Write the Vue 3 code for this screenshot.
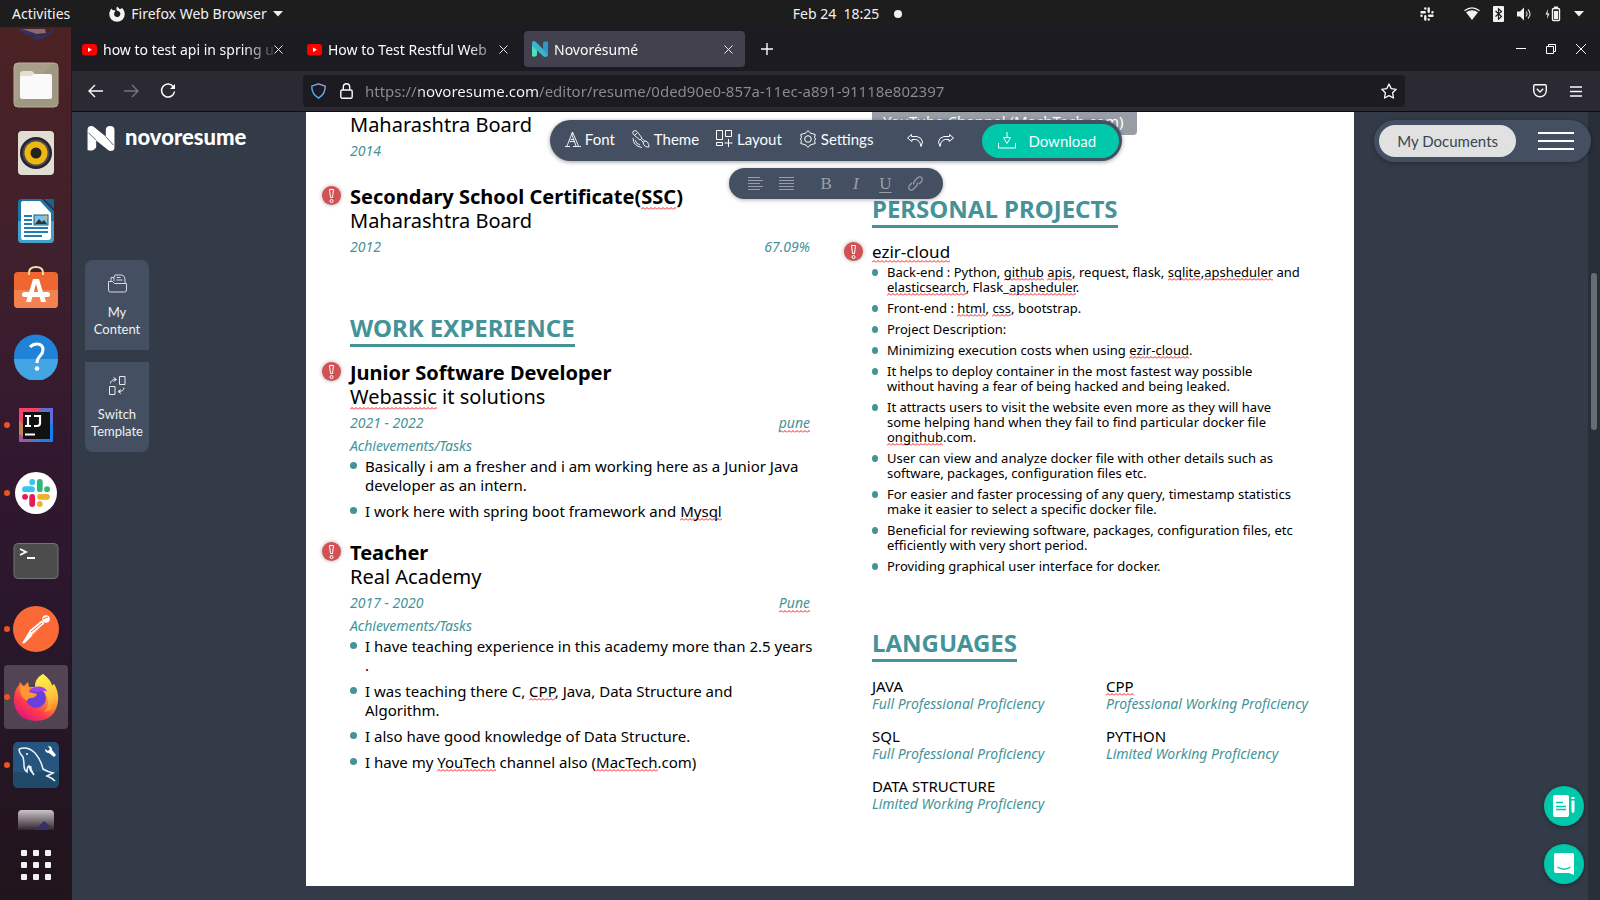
<script setup>
const tabs = [
  { title: 'how to test api in spring u', kind: 'video', active: false },
  { title: 'How to Test Restful Web', kind: 'video', active: false },
  { title: 'Novorésumé', kind: 'novo', active: true },
]

const url = 'https://novoresume.com/editor/resume/0ded90e0-857a-11ec-a891-91118e802397'

// Words in square brackets are flagged by the spell checker.
const parse = (line) =>
  line.split(/(\[[^\]]*\])/).filter(Boolean).map((part) =>
    part[0] === '[' ? { text: part.slice(1, -1), flagged: true } : { text: part, flagged: false })

const education = [
  { org: 'Maharashtra Board', date: '2014', side: '' },
  { title: 'Secondary School Certificate([SSC])', org: 'Maharashtra Board', date: '2012', side: '67.09%' },
]

const jobs = [
  {
    title: 'Junior Software Developer',
    org: '[Webassic] it solutions',
    date: '2021 - 2022',
    side: '[pune]',
    tasks: [
      ['Basically i am a fresher and i am working here as a Junior Java', 'developer as an intern.'],
      ['I work here with spring boot framework and [Mysql]'],
    ],
  },
  {
    title: 'Teacher',
    org: 'Real Academy',
    date: '2017 - 2020',
    side: '[Pune]',
    tasks: [
      ['I have teaching experience in this academy more than 2.5 years', '.'],
      ['I was teaching there C, [CPP], Java, Data Structure and', 'Algorithm.'],
      ['I also have good knowledge of Data Structure.'],
      ['I have my [YouTech] channel also ([MacTech].com)'],
    ],
  },
]

const projectPoints = [
  ['Back-end : Python, [github] [apis], request, flask, [sqlite],[apsheduler] and', '[elasticsearch], Flask_[apsheduler].'],
  ['Front-end : [html], [css], bootstrap.'],
  ['Project Description:'],
  ['Minimizing execution costs when using [ezir-cloud].'],
  ['It helps to deploy container in the most fastest way possible', 'without having a fear of being hacked and being leaked.'],
  ['It attracts users to visit the website even more as they will have', 'some helping hand when they fail to find particular docker file', '[ongithub].com.'],
  ['User can view and analyze docker file with other details such as', 'software, packages, configuration files etc.'],
  ['For easier and faster processing of any query, timestamp statistics', 'make it easier to select a specific docker file.'],
  ['Beneficial for reviewing software, packages, configuration files, etc', 'efficiently with very short period.'],
  ['Providing graphical user interface for docker.'],
]

const languages = [
  { name: 'JAVA', level: 'Full Professional Proficiency' },
  { name: '[CPP]', level: 'Professional Working Proficiency' },
  { name: 'SQL', level: 'Full Professional Proficiency' },
  { name: 'PYTHON', level: 'Limited Working Proficiency' },
  { name: 'DATA STRUCTURE', level: 'Limited Working Proficiency' },
]
</script>

<template>
  <div class="desktop">
    <header class="topbar">
      <div class="top-left">
        <button class="plain">Activities</button>
        <button class="plain app-menu">
          <svg width="16" height="16" viewBox="0 0 16 16"><path d="M8 0.5C9 1.500 10 2 10.500 3 11.500 3 12.500 2.500 13 2c1.500 1.500 3 3.700 2.700 6.500A7.700 7.300 0 0 1 .3 8.500C.2 6 1.200 4 2.500 2.500L3.500 4 6.500 4.500 5.500 6.500C4.500 8.500 5.500 10.800 8 10.900c2.500 0 3.800-2.200 3.200-4C10.700 5.500 9.500 5 8.500 5 7.200 4 7.200 2 8 .5z" fill="#f2f2f2" /></svg>
          <span>Firefox Web Browser</span>
          <svg width="10" height="6" viewBox="0 0 10 6"><path d="M0 0h10L5 5.500z" fill="#f2f2f2" /></svg>
        </button>
      </div>
      <button class="plain clock">Feb 24&nbsp; 18:25 <i></i></button>
      <div class="top-right">
        <svg class="tray-slack" width="14" height="14" viewBox="0 0 14 14" stroke="#f2f2f2" stroke-width="2.400" stroke-linecap="round"><path d="M1.500 5.300h3.300M5.300 1.500v.1M8.700 1.500v3.300M12.400 5.300h.1M9.200 8.700h3.300M8.700 12.400v.1M5.300 9.200v3.300M1.500 8.700h.1" /></svg>
        <svg width="16" height="14" viewBox="0 0 16 14"><path d="M.5 3.800Q8-2 15.500 3.800" fill="none" stroke="#f2f2f2" stroke-width="1.300" /><path d="M2 5.200Q8 1.500 14 5.200L8 13z" fill="#f2f2f2" /></svg>
        <svg width="11" height="16" viewBox="0 0 11 16"><rect width="11" height="16" rx="1" fill="#f2f2f2" /><path d="M2.500 5l6 5.500-3 2.700V2.800l3 2.700-6 5" fill="none" stroke="#1d1d1d" stroke-width="1.200" /></svg>
        <svg width="15" height="14" viewBox="0 0 15 14"><path d="M0 4.500h3L7 .5v13L3 9.500H0z" fill="#f2f2f2" /><path d="M9 4.500q2 2.500 0 5M11 2.500q4 4.500 0 9" fill="none" stroke="#d0d0d0" stroke-width="1.200" /></svg>
        <svg width="16" height="16" viewBox="0 0 16 16"><path d="M3 3L.5 8.500h2L2 13l2.500-5.500h-2z" fill="#f2f2f2" /><rect x="7.500" y="2.500" width="7" height="12" rx="1" fill="none" stroke="#f2f2f2" stroke-width="1.400" /><path d="M9 .5h4v2H9zM9 5h4v8H9z" fill="#f2f2f2" /></svg>
        <svg width="10" height="6" viewBox="0 0 10 6"><path d="M0 0h10L5 5.500z" fill="#f2f2f2" /></svg>
      </div>
    </header>

    <div class="below">
      <nav class="dock" aria-label="Dock">
        <button class="slot slot-top" aria-label="Thunderbird">
          <svg width="44" height="14" viewBox="0 0 44 14"><path d="M3 2q8 7 18 7-4 2-6 1 4 3 9 3 12-3 17-11l-6 3-9 4L16 2z" fill="#323063" /><path d="M8 2h23l1 4-9 1z" fill="#8a6870" /></svg>
        </button>
        <button class="slot" aria-label="Files">
          <svg width="46" height="46" viewBox="0 0 46 46"><rect x="1" y="1" width="44" height="44" rx="4" fill="#a79f8a" stroke="#b9b29d" /><path d="M1.500 40L40 1.500h2q3 0 3 3v37q0 3-3 3H5q-3 0-3.500-3z" fill="#979077" opacity=".5" /><path d="M7 12q0-3 3-3h9l4 4v6H7z" fill="#e4dfd3" /><path d="M7 16q0-2 2-2h9l3-2h16q2 0 2 2v21q0 2-2 2H9q-2 0-2-2z" fill="#fafafa" /></svg>
        </button>
        <button class="slot" aria-label="Rhythmbox">
          <svg width="46" height="46" viewBox="0 0 46 46"><rect x="5" y="1" width="36" height="44" rx="4" fill="#e2ddd2" /><circle cx="23" cy="23" r="16" fill="#25232f" /><circle cx="23" cy="23" r="13.500" fill="#4a4956" /><circle cx="23" cy="23" r="11.500" fill="#eeb711" /><circle cx="23" cy="23" r="5.500" fill="#222" /></svg>
        </button>
        <button class="slot" aria-label="LibreOffice Writer">
          <svg width="46" height="46" viewBox="0 0 46 46"><path d="M9 1h20l12 12v28q0 4-4 4H9q-4 0-4-4V5q0-4 4-4z" fill="#1b75a6" /><path d="M5 23h36v18q0 4-4 4H9q-4 0-4-4z" fill="#459fcb" /><path d="M31 1h10v10z" fill="#1a628c" /><path d="M10 3h17l11 12v24q0 3-3 3H10q-2 0-2-3V5q0-2 2-2z" fill="#fff" /><path d="M11 18h8M11 22h8M11 26h8M11 30h24M11 34h24M11 38h18" stroke="#227eb0" stroke-width="2" /><rect x="21" y="17" width="14" height="10" fill="#7cc4e8" stroke="#175b84" /><path d="M22 26l4-5 3 3 2-2 3 4z" fill="#333" /><circle cx="33" cy="19" r="1.500" fill="#efbd22" /></svg>
        </button>
        <button class="slot" aria-label="Ubuntu Software">
          <svg width="46" height="46" viewBox="0 3 46 46"><rect x="1" y="9" width="44" height="36" rx="4" fill="#ef6630" /><path d="M1 27h44v14q0 4-4 4H5q-4 0-4-4z" fill="#f3824e" /><path d="M16 12v-2q0-6 7-6t7 6v2" fill="none" stroke="#f7d9a5" stroke-width="2" /><path d="M13 39l7-23h6l7 23h-5l-5-18-5 18z" fill="#fff" /><rect x="9" y="29" width="28" height="5" rx="2.500" fill="#fff" /></svg>
        </button>
        <button class="slot" aria-label="Help">
          <svg width="46" height="46" viewBox="0 0 46 46"><circle cx="23" cy="22.500" r="22" fill="#2083d8" /><path d="M1 25a22 22 0 0 0 44 0z" fill="#44a5e5" /><path d="M17 13q3-3 7-3 6 0 6 6 0 3-3 6-3 3-3 7" fill="none" stroke="#fff" stroke-width="3" /><circle cx="24" cy="34.500" r="2.300" fill="#fff" /></svg>
        </button>
        <button class="slot running" aria-label="IntelliJ IDEA">
          <svg width="46" height="46" viewBox="0 0 46 46"><path d="M6 6h34v34H6z" fill="#5d6fd6" /><path d="M6 6h22L6 30z" fill="#f7406a" /><path d="M6 18l8 8-4 14H6z" fill="#c18555" /><path d="M6 32l14 8H6z" fill="#a355a0" /><path d="M40 20L26 40h14z" fill="#157ef2" /><rect x="10" y="10" width="27" height="27" fill="#111" /><path d="M12 14h6M15 14v10M12 24h6M21 14h6v7q0 3-3 3h-3" fill="none" stroke="#fff" stroke-width="2.200" /><path d="M12 32.500h10" stroke="#fff" stroke-width="2" /></svg>
        </button>
        <button class="slot running" aria-label="Slack">
          <svg width="46" height="46" viewBox="0 0 46 46" stroke-width="5.800" stroke-linecap="round"><circle cx="23" cy="23" r="21" fill="#fff" /><path d="M12 19.200h7M19.200 12v.2h0" stroke="#36c5f0" /><path d="M26.800 12v7.200M34 19.200h.1" stroke="#2eb67d" /><path d="M19.200 27v7M12 26.800h.1" stroke="#e01e5a" /><path d="M27 26.800h7M26.800 34v.1" stroke="#ecb22e" /></svg>
        </button>
        <button class="slot" aria-label="Terminal">
          <svg width="46" height="46" viewBox="0 0 46 46"><rect x="1" y="5.500" width="44" height="35" rx="4" fill="#4c4c4c" stroke="#747474" /><path d="M7 11l6 3-6 3M14 20h8" fill="none" stroke="#fff" stroke-width="1.800" /></svg>
        </button>
        <button class="slot running" aria-label="Postman">
          <svg width="46" height="46" viewBox="0 0 46 46"><circle cx="23" cy="23" r="23" fill="#fb6a36" /><circle cx="33" cy="13" r="3.800" fill="#fff" /><path d="M17 24l11-9q3 0 3 3L20 29l-8 8-3 .5 1-2z" fill="#fff" /><path d="M18 26l11-9M19 29l11-10M30 13l5-2" stroke="#fb6a36" /></svg>
        </button>
        <button class="slot running current" aria-label="Firefox">
          <svg width="46" height="48" viewBox="0 0 46 48">
            <defs>
              <linearGradient id="fox" x1=".9" y1="0" x2=".2" y2="1"><stop offset="0" stop-color="#fff14e" /><stop offset=".4" stop-color="#ff9a2d" /><stop offset=".7" stop-color="#ff3c4c" /><stop offset="1" stop-color="#dd0f82" /></linearGradient>
              <linearGradient id="flame" x1=".4" y1="0" x2=".6" y2="1"><stop offset="0" stop-color="#fff34f" /><stop offset=".6" stop-color="#ffc53a" /><stop offset="1" stop-color="#ff8a35" /></linearGradient>
            </defs>
            <path d="M30 1q8 6 9 12l2-2q5 8 4 17-2 19-22 20Q3 47 1 29 0 18 6 12l1-3q2 3 4 4l4-4 1 5 6 0Q21 6 30 1z" fill="url(#fox)" />
            <path d="M30 1q8 6 9 12l2-2q5 9 3 18-3 9-13 10 6-6 3-15-3-9-12-10Q22 6 30 1z" fill="url(#flame)" />
            <circle cx="23" cy="25" r="10" fill="#6a40dc" />
            <path d="M15 18q7-6 14-4 5 2 5 5-3-2-6-1l-3 1z" fill="#9a45eb" />
            <path d="M7 11q2 3 9 2 1 4 0 6l8 2q-1 4-7 4-3 1-3 3-8-4-7-17z" fill="#ff9630" />
          </svg>
        </button>
        <button class="slot running" aria-label="MySQL Workbench">
          <svg width="46" height="46" viewBox="0 0 46 46"><rect width="46" height="46" rx="5" fill="#25557e" /><path d="M0 30h46v11q0 5-5 5H5q-5 0-5-5z" fill="#1e425e" opacity=".6" /><path d="M6 7q9-3 16 4 6 7 8 16 5 3 10 4l-6 3q5 2 8 5M6 7q0 4 4 8 1 4 1 8 0 5 3 7 0-5 2-6 1 5 5 9-4-6-3-9" fill="none" stroke="#edf5fb" stroke-width="1.500" /><circle cx="14" cy="12" r="1" fill="#fff" /><path d="M35 4l2 3-2 2-3-2q0 4 4 4l5 4 2-2-4-5q0-4-4-4z" fill="#fff" /></svg>
        </button>
        <button class="slot slot-end" aria-label="Drawing app">
          <svg width="36" height="20" viewBox="0 0 36 20"><defs><linearGradient id="fade" x1="0" y1="0" x2="0" y2="1"><stop offset="0" stop-color="#cbc4ca" /><stop offset="1" stop-color="#33242f" /></linearGradient></defs><path d="M0 20V4q0-4 4-4h28q4 0 4 4v16z" fill="url(#fade)" /><path d="M17 20l9-9 6 5-3 4z" fill="#333168" /></svg>
        </button>
        <button class="apps" aria-label="Show Applications"><i v-for="n in 9" :key="n"></i></button>
      </nav>

      <section class="window">
        <div class="tabbar">
          <div v-for="tab in tabs" :key="tab.title" class="tab" :class="{ active: tab.active }">
            <svg v-if="tab.kind === 'video'" width="15" height="15" viewBox="0 0 15 15"><rect y="2" width="15" height="11.500" rx="3" fill="#f00" /><path d="M6 5.500v4.500L10 7.700z" fill="#fff" /></svg>
            <svg v-else width="16" height="16" viewBox="0 0 16 16"><path d="M0 2q0-2 2-2 1 0 2 1l12 12q0 3-2.500 3Q12 16 11 15L5 9.500V14q-2 2.500-5 1z" fill="#38b6cf" /><path d="M0 5l5 4.500V14q-2 2.500-5 1z" fill="#4fe0bb" /><path d="M11 2q2-3 5-1v13l-5-5z" fill="#2d97c6" /></svg>
            <button class="tab-title">{{ tab.title }}</button>
            <button class="tab-close" aria-label="Close tab"><svg width="9" height="9" viewBox="0 0 9 9"><path d="M.5.5l8 8M8.500.5l-8 8" stroke="#e8e8ec" stroke-width="1" /></svg></button>
          </div>
          <button class="new-tab" aria-label="New tab"><svg width="12" height="12" viewBox="0 0 12 12"><path d="M6 0v12M0 6h12" stroke="#fbfbfe" stroke-width="1.400" /></svg></button>
          <div class="win-controls">
            <button aria-label="Minimize"><svg width="10" height="10" viewBox="0 0 10 10"><path d="M0 4.500h10" stroke="#fff" /></svg></button>
            <button aria-label="Restore"><svg width="10" height="10" viewBox="0 0 10 10"><path d="M.5 2.500h7v7h-7zM2.500 2.500v-2h7v7h-2" fill="none" stroke="#fff" /></svg></button>
            <button aria-label="Close"><svg width="10" height="10" viewBox="0 0 10 10"><path d="M0 0l10 10M10 0L0 10" stroke="#fff" /></svg></button>
          </div>
        </div>

        <div class="navbar">
          <div class="nav-buttons">
            <button aria-label="Back"><svg width="15" height="14" viewBox="0 0 15 14"><path d="M15 7H1M7 1L1 7l6 6" fill="none" stroke="#fbfbfe" stroke-width="1.400" /></svg></button>
            <button aria-label="Forward"><svg width="15" height="14" viewBox="0 0 15 14"><path d="M0 7h14M8 1l6 6-6 6" fill="none" stroke="#77767e" stroke-width="1.400" /></svg></button>
            <button aria-label="Reload"><svg width="16" height="16" viewBox="0 0 16 16"><path d="M13.500 4A6.500 6.500 0 1 0 14.500 8.500" fill="none" stroke="#fbfbfe" stroke-width="1.500" /><path d="M15 1v5h-5z" fill="#fbfbfe" /></svg></button>
          </div>
          <div class="urlbar">
            <svg width="15" height="16" viewBox="0 0 15 16"><defs><linearGradient id="shield" x1="0" y1="1" x2="1" y2="0"><stop offset="0" stop-color="#25b8f5" /><stop offset="1" stop-color="#b39af0" /></linearGradient></defs><path d="M7.500.8l6.700 2.400Q14.500 11 7.500 15.200.5 11 .8 3.200z" fill="none" stroke="url(#shield)" stroke-width="1.400" stroke-linejoin="round" /></svg>
            <svg width="13" height="16" viewBox="0 0 13 16"><rect x=".8" y="7" width="11.400" height="8.200" rx="1.500" fill="none" stroke="#fbfbfe" stroke-width="1.400" /><path d="M3.300 7V4q0-3.200 3.200-3.200T9.700 4v3" fill="none" stroke="#fbfbfe" stroke-width="1.400" /></svg>
            <input class="url" type="text" aria-label="Address" :value="url" />
            <button aria-label="Bookmark"><svg width="16" height="16" viewBox="0 0 16 16"><path d="M8 1l2.200 4.600 5 .7-3.600 3.500.9 5.200L8 12.600 3.500 15l.9-5.200L.8 6.300l5-.7z" fill="none" stroke="#fbfbfe" stroke-width="1.300" stroke-linejoin="round" /></svg></button>
          </div>
          <div class="nav-end">
            <button aria-label="Pocket"><svg width="14" height="14" viewBox="0 0 14 14"><path d="M2 .7h10q1.300 0 1.300 1.300v4.500A6.300 6.300 0 0 1 .7 6.500V2Q.7.700 2 .7z" fill="none" stroke="#fbfbfe" stroke-width="1.400" /><path d="M3.800 4.800L7 8l3.200-3.200" fill="none" stroke="#fbfbfe" stroke-width="1.400" /></svg></button>
            <button aria-label="Menu"><svg width="12" height="11" viewBox="0 0 12 11"><path d="M0 1h12M0 5.500h12M0 10h12" stroke="#fbfbfe" stroke-width="1.300" /></svg></button>
          </div>
        </div>

        <main class="editor">
          <div class="overlay">
            <a class="brand" href="#">
              <svg width="28" height="25" viewBox="0 0 28 26"><path d="M0 4q0-4 4-4 2 0 4 2l11 9V4q0-4 4.500-4T28 4v18q0 4-4 4-2 0-4-2L9 15v7q-3 5-9 3z" fill="#fff" /><path d="M1 7l8 8M19 11l8 9" stroke="#323b47" stroke-width=".8" /></svg>
              <span>novoresume</span>
            </a>
            <div class="toolbars">
              <div class="toolbar">
                <button class="tool"><svg width="16" height="16" viewBox="0 0 16 16" fill="none" stroke="#fff" stroke-width=".9"><path d="M0 15.500h5M8 15.500h8M2 15L7.500 1 13.500 15M7.500 1l-.5 3 4 11M4.500 10.500H10M5.500 8.500h3.700" /></svg>Font</button>
                <button class="tool"><svg width="18" height="18" viewBox="0 0 18 18" fill="none" stroke="#fff" stroke-width=".9"><path d="M1 1.500q2-2 4 0l5 6.500-2 2-6-5q-2-2-1-3.500zM3 5l2-2M8.500 9.500l3 3M10 8.500l3 3M11 12.500q2-3 4.500-.5 1.500 2.500 1.500 5-5 .5-6-4.500zM1 8q0 8 9 9.500M3 10q1 4 5 5" /></svg>Theme</button>
                <button class="tool"><svg width="17" height="17" viewBox="0 0 17 17" fill="none" stroke="#fff" stroke-width="1"><path d="M.5.5h6v9h-6zM9.500.5h6v6h-6zM.5 12.500h6v3h-6zM12.500 9v8M8.500 13h8" /></svg>Layout</button>
                <button class="tool"><svg width="18" height="18" viewBox="0 0 18 18" fill="none" stroke="#fff" stroke-width="1"><path d="M9 .6l2 2.200 2.200.9 3 .7-.6 3 1 1.600-1 1.600.6 3-3 .7-2.200.9-2 2.200-2-2.200-2.200-.9-3-.7.6-3-1-1.600 1-1.600-.6-3 3-.7L7 2.800z" /><circle cx="9" cy="9" r="3.300" /></svg>Settings</button>
                <div class="history">
                  <button aria-label="Undo"><svg width="17" height="13" viewBox="0 0 17 13" fill="none" stroke="#fff"><path d="M4.500.5L.5 4 5 7.500V5.500q8-1.500 9 7 3-5 0-8-3-3-9.500-2z" /></svg></button>
                  <button aria-label="Redo"><svg width="17" height="13" viewBox="0 0 17 13" fill="none" stroke="#fff"><path d="M12.500.5l4 3.500-4.500 3.500V5.500Q4 4 3 12.500 0 7.500 3 4.500q3-3 9.500-2z" /></svg></button>
                </div>
                <button class="download"><svg width="18" height="17" viewBox="0 0 18 17" fill="none" stroke="#fff" stroke-width="1"><path d="M.5 11v5h17v-5M9 0v5M5.500 5.500h7L9 11.500z" /></svg>Download</button>
              </div>
              <div class="formatbar">
                <button aria-label="Align left"><svg width="15" height="13" viewBox="0 0 15 13" stroke="#9aa0a9"><path d="M0 .5h12M0 3.500h15M0 6.500h12M0 9.500h15M0 12.500h12" /></svg></button>
                <button class="justify" aria-label="Justify"><svg width="15" height="13" viewBox="0 0 15 13" stroke="#9aa0a9"><path d="M0 .5h15M0 3.500h15M0 6.500h15M0 9.500h15M0 12.500h15" /></svg></button>
                <button class="letter">B</button>
                <button class="letter slanted">I</button>
                <button class="letter lined">U</button>
                <button aria-label="Link"><svg width="15" height="15" viewBox="0 0 15 15" fill="none" stroke="#9aa0a9" stroke-width="1.200"><path d="M6 8.500q-1-2 .5-3.500l3-3q2-2 4-.5 1.500 2 0 4L11 8M9 6.500q1 2-.5 3.500l-3 3q-2 2-4 .5-1.500-2 0-4L4 7" /></svg></button>
              </div>
            </div>
            <div class="account">
              <button class="docs">My Documents</button>
              <button class="burger" aria-label="Open menu"><i></i><i></i><i></i></button>
            </div>
          </div>

          <aside class="side">
            <button class="side-btn">
              <svg width="19" height="19" viewBox="0 0 19 19" fill="none" stroke="#e8ebee" stroke-width=".9"><path d="M.5 16V7.500h4l2 2h12V16q0 2-2 2h-14q-2 0-2-2zM3 7V3.500h3l1-2.500h7q3 1 3 4v4M6 4v3M8.500 3.500h4M8.500 6h6" /></svg>
              <span>My<br />Content</span>
            </button>
            <button class="side-btn">
              <svg width="17" height="19" viewBox="0 0 17 19" fill="none" stroke="#e8ebee" stroke-width="1"><path d="M10.500.5h5.500v8h-5.500zM.5 10.500H6v8H.5zM1.500 7.500q0-4 5.500-4M4.500 1.500l3 2-3 2M15 11.500q0 4-5.500 4M12 13.500l-3 2 3 2" /></svg>
              <span>Switch<br />Template</span>
            </button>
          </aside>

          <article class="sheet">
            <div class="tooltip">YouTube Channel (MachTech.com)</div>
            <div class="col left">
              <section class="entries">
                <div v-for="(e, i) in education" :key="i" class="entry">
                  <span v-if="e.title" class="alert"><svg width="7" height="14" viewBox="0 0 7 14" fill="none" stroke="#fff"><path d="M1.500.5h4l-1 8h-2z" /><circle cx="3.500" cy="12" r="1.500" /></svg></span>
                  <h3 v-if="e.title"><span v-for="(p, k) in parse(e.title)" :key="k" :class="{ typo: p.flagged }">{{ p.text }}</span></h3>
                  <p class="org">{{ e.org }}</p>
                  <p class="meta"><span>{{ e.date }}</span><span>{{ e.side }}</span></p>
                </div>
              </section>
              <section class="block">
                <h2>WORK EXPERIENCE</h2>
                <div class="entries">
                  <div v-for="job in jobs" :key="job.title" class="entry">
                    <span class="alert"><svg width="7" height="14" viewBox="0 0 7 14" fill="none" stroke="#fff"><path d="M1.500.5h4l-1 8h-2z" /><circle cx="3.500" cy="12" r="1.500" /></svg></span>
                    <h3>{{ job.title }}</h3>
                    <p class="org"><span v-for="(p, k) in parse(job.org)" :key="k" :class="{ typo: p.flagged }">{{ p.text }}</span></p>
                    <p class="meta"><span>{{ job.date }}</span><span v-for="(p, k) in parse(job.side)" :key="k" :class="{ typo: p.flagged }">{{ p.text }}</span></p>
                    <p class="label">Achievements/Tasks</p>
                    <ul class="tasks">
                      <li v-for="(lines, j) in job.tasks" :key="j"><div v-for="(line, m) in lines" :key="m"><span v-for="(p, k) in parse(line)" :key="k" :class="{ typo: p.flagged }">{{ p.text }}</span></div></li>
                    </ul>
                  </div>
                </div>
              </section>
            </div>

            <div class="col right">
              <section>
                <h2>PERSONAL PROJECTS</h2>
                <div class="entry">
                  <span class="alert"><svg width="7" height="14" viewBox="0 0 7 14" fill="none" stroke="#fff"><path d="M1.500.5h4l-1 8h-2z" /><circle cx="3.500" cy="12" r="1.500" /></svg></span>
                  <p class="project"><span class="typo">ezir-cloud</span></p>
                  <ul class="points">
                    <li v-for="(lines, j) in projectPoints" :key="j"><div v-for="(line, m) in lines" :key="m"><span v-for="(p, k) in parse(line)" :key="k" :class="{ typo: p.flagged }">{{ p.text }}</span></div></li>
                  </ul>
                </div>
              </section>
              <section class="block">
                <h2>LANGUAGES</h2>
                <div class="langs">
                  <div v-for="lang in languages" :key="lang.name">
                    <p class="lang"><span v-for="(p, k) in parse(lang.name)" :key="k" :class="{ typo: p.flagged }">{{ p.text }}</span></p>
                    <p class="label">{{ lang.level }}</p>
                  </div>
                </div>
              </section>
            </div>
          </article>

          <div class="scrollbar"><i></i></div>
          <div class="floats">
            <button aria-label="Notes"><svg width="22" height="22" viewBox="0 0 22 22"><rect x="0" y="0" width="16" height="22" rx="2" fill="#fff" /><path d="M3 7.500h7M3 11.500h10M3 14.500h10" stroke="#00c8aa" stroke-width="1.400" /><path d="M18.500 5.500h3v11l-1.500 2-1.500-2zM18.500 2h3v2h-3z" fill="#fff" /></svg></button>
            <button aria-label="Chat"><svg width="20" height="22" viewBox="0 0 20 22"><path d="M2 0h16q2 0 2 2v20l-5-2H2q-2 0-2-2V2q0-2 2-2z" fill="#fff" /><path d="M3.500 14q6.500 4.500 13 0" fill="none" stroke="#00c8aa" stroke-width="1.500" /></svg></button>
          </div>
        </main>
      </section>
    </div>
  </div>
</template>

<style>
body { margin: 0; background: #1d1d1d; }
</style>

<style scoped>
.desktop { display: flex; flex-direction: column; height: 100vh; overflow: hidden; font-family: "Noto Sans", "Open Sans", sans-serif; font-size: 14px; color: #000; }
button { border: 0; padding: 0; margin: 0; background: none; font: inherit; color: inherit; cursor: pointer; }
button svg, .brand svg { display: block; flex: none; }
h2, h3, p, ul { margin: 0; padding: 0; font-weight: 400; }

.topbar { flex: none; display: grid; grid-template-columns: 1fr auto 1fr; align-items: center; height: 27px; padding: 0 15px 0 12px; background: #1d1d1d; color: #f2f2f2; }
.plain { display: flex; align-items: center; white-space: nowrap; }
.top-left { display: flex; gap: 39px; }
.app-menu { gap: 6px; }
.clock { padding-left: 98px; gap: 15px; }
.clock i { width: 8px; height: 8px; border-radius: 50%; background: #f2f2f2; }
.top-right { display: flex; justify-content: flex-end; align-items: center; gap: 12px; }
.top-right svg { margin-right: 1px; }
.top-right .tray-slack { margin-right: 18px; }

.below { flex: 1; min-height: 0; display: flex; }

.dock { flex: none; width: 72px; box-sizing: border-box; display: flex; flex-direction: column; border-right: 1px solid #1c1a1e; background: linear-gradient(#4c2224, #40202c 25%, #31182f 50%, #271629 75%, #21141b); }
.slot { position: relative; flex: none; height: 68px; display: flex; align-items: center; justify-content: center; }
.slot-top { height: 24px; align-items: flex-start; }
.slot-end { height: 31px; align-items: flex-end; }
.running::before { content: ""; position: absolute; left: 4px; top: 31px; width: 6px; height: 6px; border-radius: 50%; background: #e95420; }
.current::after { content: ""; position: absolute; inset: 2px 3px 2px 4px; border-radius: 4px; background: rgba(255, 255, 255, .2); }
.current svg { position: relative; z-index: 1; }
.current::before { z-index: 1; }
.apps { flex: 1; display: grid; grid-template-columns: repeat(3, 6px); grid-auto-rows: 6px; gap: 6px; place-content: center; }
.apps i { border-radius: 1px; background: #f2f2f2; }

.window { flex: 1; min-width: 0; display: flex; flex-direction: column; color: #fbfbfe; }
.tabbar { flex: none; display: flex; align-items: center; gap: 4px; height: 44px; padding: 0 14px 0 2px; background: #1c1b22; }
.tab { display: flex; align-items: center; width: 221px; height: 36px; box-sizing: border-box; padding: 0 12px 0 8px; border-radius: 4px; }
.tab svg { flex: none; }
.tab.active { background: #42414d; }
.tab-title { flex: 1; min-width: 0; margin-left: 6px; overflow: hidden; white-space: nowrap; text-align: left; mask-image: linear-gradient(90deg, #000 140px, transparent 176px); }
.new-tab { margin-left: 12px; }
.win-controls { margin-left: auto; display: flex; gap: 20px; }

.navbar { flex: none; display: flex; align-items: center; height: 40px; background: #2b2a33; border-bottom: 1px solid #0c0c0d; }
.nav-buttons { display: flex; align-items: center; gap: 21px; width: 231px; box-sizing: border-box; padding-left: 16px; }
.urlbar { flex: 1; display: flex; align-items: center; gap: 14px; height: 32px; box-sizing: border-box; padding: 0 8px; border-radius: 4px; background: #1c1b22; }
.url { flex: 1; min-width: 0; border: 0; padding: 0; outline: 0; margin-left: -2px; font: inherit; font-size: 15px; color: transparent; background: linear-gradient(90deg, #8d8c93 54px, #fbfbfe 54px 174px, #8d8c93 174px); background-clip: text; -webkit-background-clip: text; }
.nav-end { display: flex; align-items: center; justify-content: flex-end; gap: 23px; width: 195px; box-sizing: border-box; padding-right: 18px; }

.editor { position: relative; flex: 1; min-height: 0; overflow: hidden; display: grid; grid-template-columns: 234px minmax(0, 1fr) 234px 12px; align-items: start; background: #323b47; }
.overlay { position: absolute; z-index: 3; top: 8px; left: 0; right: 0; display: grid; grid-template-columns: 1fr auto 1fr; align-items: start; font-family: Lato, sans-serif; font-size: 15px; }
.brand { display: flex; align-items: flex-start; gap: 10px; margin: 6px 0 0 15px; color: #fff; text-decoration: none; font-size: 22px; font-weight: 900; line-height: 22px; }
.toolbars { display: flex; flex-direction: column; align-items: center; gap: 7px; }
.toolbar { display: flex; align-items: center; height: 41px; box-sizing: border-box; padding: 0 3px 0 15px; border-radius: 21px; background: #445061; box-shadow: 0 1px 4px rgba(0, 0, 0, .4); }
.tool { display: flex; align-items: center; gap: 4px; margin-right: 17px; height: 32px; margin-bottom: 4px; }
.history { display: flex; gap: 13px; margin: 0 28px 0 17px; }
.download { display: flex; align-items: center; gap: 12px; height: 34px; padding: 0 23px 0 16px; border-radius: 17px; background: #00c8aa; }
.formatbar { display: flex; align-items: center; justify-content: space-between; width: 214px; height: 31px; box-sizing: border-box; padding: 0 20px 0 19px; border-radius: 16px; background: #445061; color: #9aa0a9; box-shadow: 0 1px 4px rgba(0, 0, 0, .3); }
.justify { margin-right: 10px; }
.letter { width: 14px; font-family: "Liberation Serif", serif; font-size: 17px; }
.slanted { font-style: italic; }
.lined { text-decoration: underline; text-underline-offset: 3px; }
.account { justify-self: end; display: flex; align-items: center; gap: 22px; height: 42px; box-sizing: border-box; margin-right: 9px; padding: 0 17px 0 5px; border-radius: 21px; background: #445061; box-shadow: 0 1px 5px rgba(0, 0, 0, .3); }
.docs { height: 32px; padding: 0 18px; border-radius: 16px; background: #e1e1e1; color: #3b4452; }
.burger { display: grid; gap: 6px; width: 36px; }
.burger i { height: 2px; background: #fff; }

.side { display: flex; flex-direction: column; gap: 12px; width: 64px; margin: 148px 0 0 13px; font-family: Lato, sans-serif; font-size: 13px; line-height: 17px; }
.side-btn { display: flex; flex-direction: column; align-items: center; gap: 11px; height: 90px; box-sizing: border-box; padding-top: 14px; background: #445061; color: #eef0f2; }
.side-btn:first-child { border-radius: 8px 8px 0 0; }
.side-btn:last-child { border-radius: 0 0 8px 8px; }

.sheet { position: relative; display: grid; grid-template-columns: minmax(0, 460fr) minmax(0, 438fr); gap: 62px; padding: 0 44px 73px; background: #fff; color: #000; white-space: nowrap; }
.tooltip { position: absolute; top: 0; left: 566px; height: 23px; padding: 0 13px 0 11px; border-radius: 0 0 4px 0; background: #999da5; color: #fff; font-size: 15px; line-height: 18px; }
.left { padding-top: 1px; }
.right { padding-top: 80px; }
.block { margin-top: 52px; }
.left .block { margin-top: 50px; }
.entries { display: grid; grid-template-columns: minmax(0, 1fr); gap: 20px; }
.entry { position: relative; }
h2 { display: table; margin-bottom: 13px; border-bottom: 3px solid #449399; color: #449399; font-size: 24px; line-height: 33px; font-weight: 700; }
.left h2 { margin-bottom: 14px; }
h3 { font-size: 20px; line-height: 24px; font-weight: 700; }
.org { font-size: 20px; line-height: 24px; }
.meta, .label { color: #449399; font-size: 14px; font-style: italic; }
.meta { display: flex; justify-content: space-between; align-items: center; height: 28px; line-height: 20px; }
.label { line-height: 18px; }
.tasks, .points { display: grid; list-style: none; margin-top: 2px; padding-left: 15px; }
.tasks { gap: 7px; font-size: 15px; line-height: 19px; }
.points { gap: 6px; font-size: 13px; line-height: 15px; }
li { position: relative; }
li::before { content: ""; position: absolute; left: -15px; top: 5px; width: 7px; height: 7px; border-radius: 50%; background: #449399; }
.points li::before { top: 4px; width: 6px; }
.project { font-size: 17px; line-height: 22px; }
.lang { font-size: 15px; line-height: 18px; }
.langs { display: grid; grid-template-columns: repeat(2, minmax(0, 1fr)); gap: 14px 30px; padding-top: 2px; }
.alert { position: absolute; left: -28px; top: 1px; display: flex; align-items: center; justify-content: center; width: 19px; height: 19px; border-radius: 50%; background: #d15155; box-shadow: 0 0 4px rgba(0, 0, 0, .35); }
.typo { background: url("data:image/svg+xml,%3Csvg xmlns='http://www.w3.org/2000/svg' width='4' height='3'%3E%3Cpath d='M0 2.500L2 .5l2 2' fill='none' stroke='%23f00' stroke-width='.9'/%3E%3C/svg%3E") repeat-x left bottom; }

.scrollbar { align-self: stretch; grid-column: 4; background: #282f39; padding: 161px 3px 0; }
.scrollbar i { display: block; height: 157px; border-radius: 3px; background: #686d75; }
.floats { position: absolute; right: 16px; bottom: 16px; display: grid; gap: 18px; }
.floats button { display: flex; align-items: center; justify-content: center; width: 40px; height: 40px; border-radius: 50%; background: #00c8aa; box-shadow: 0 1px 5px rgba(0, 0, 0, .35); }
</style>
